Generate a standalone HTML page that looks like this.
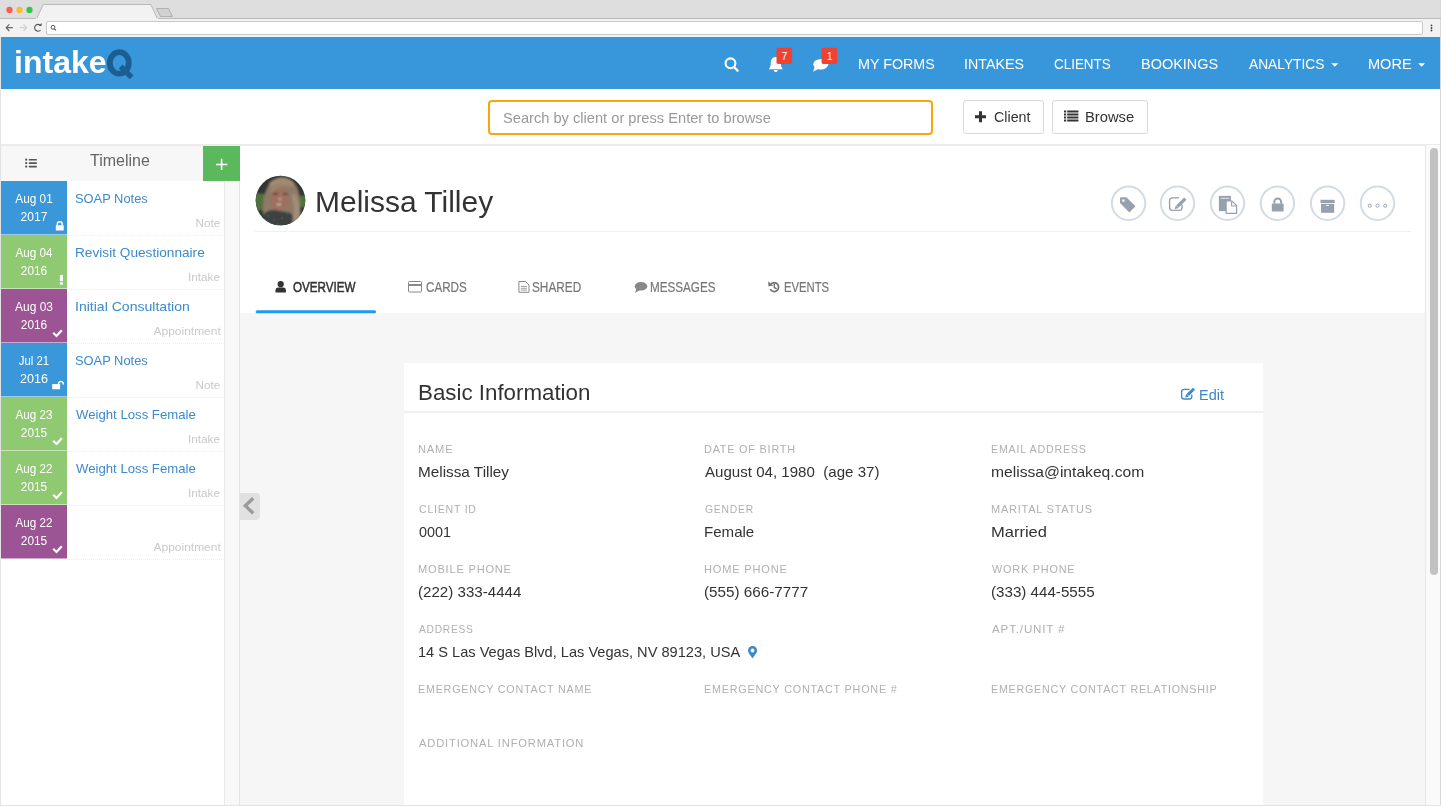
<!DOCTYPE html>
<html><head><meta charset="utf-8">
<style>
*{box-sizing:border-box;margin:0;padding:0}
html,body{width:1441px;height:806px;overflow:hidden;background:#fff;font-family:"Liberation Sans",sans-serif;}
.a{position:absolute}
.t{position:absolute;white-space:nowrap;line-height:1;z-index:6}
svg{position:absolute;overflow:visible;z-index:5}
</style></head>
<body>
<!-- browser chrome -->
<div class="a" style="left:0;top:0;width:1441px;height:18px;background:#dedede"></div>
<svg style="left:0;top:0" width="1441" height="38">
  <circle cx="9.5" cy="10" r="3.15" fill="#fc5b57"/>
  <circle cx="19.5" cy="10" r="3.15" fill="#fbbb2e"/>
  <circle cx="29.5" cy="10" r="3.15" fill="#33c748"/>
  <line x1="0" y1="18.5" x2="1441" y2="18.5" stroke="#bcbcbc" stroke-width="1"/>
  <path d="M36.5 19 L43.2 4.5 L150.8 4.5 L157.5 19 Z" fill="#f2f2f2" stroke="#b9b9b9" stroke-width="1"/>
  <rect x="36" y="18" width="122" height="2" fill="#f2f2f2"/>
  <path d="M156.5 8.5 L168.5 8.5 L172.5 16.5 L160.5 16.5 Z" fill="#d2d2d2" stroke="#b0b0b0" stroke-width="1"/>
</svg>
<div class="a" style="left:0;top:19px;width:1441px;height:18px;background:#f2f2f2"></div>
<div class="a" style="left:46px;top:21px;width:1377px;height:14px;background:#fff;border:1px solid #c9c9c9;border-radius:2px"></div>
<svg style="left:0;top:0" width="1441" height="38">
  <path d="M6.3 27.7 L12.8 27.7 M9.3 24.4 L6.2 27.7 L9.3 31" fill="none" stroke="#666" stroke-width="1.2"/>
  <path d="M20 27.7 L26.6 27.7 M23.5 24.4 L26.6 27.7 L23.5 31" fill="none" stroke="#cfcfcf" stroke-width="1.2"/>
  <path d="M40.6 25.6 A3.4 3.4 0 1 0 40.6 30" fill="none" stroke="#555" stroke-width="1.1"/>
  <path d="M38.6 26 L41.6 26 L41.6 23 Z" fill="#555"/>
  <circle cx="53" cy="27.3" r="1.9" fill="none" stroke="#555" stroke-width="1"/>
  <line x1="54.3" y1="28.6" x2="56" y2="30.3" stroke="#555" stroke-width="1.1"/>
  <circle cx="1431.5" cy="25.4" r="0.9" fill="#444"/>
  <circle cx="1431.5" cy="28" r="0.9" fill="#444"/>
  <circle cx="1431.5" cy="30.5" r="0.9" fill="#444"/>
</svg>
<div class="a" style="left:1440px;top:0;width:1px;height:806px;background:#d8d8d8"></div>
<div class="a" style="left:0;top:37px;width:1px;height:769px;background:#e3e3e3"></div>

<!-- header -->
<div class="a" style="left:1px;top:37px;width:1439px;height:52px;background:#3896da"></div>
<div class="t" id="logo1" style="left:14.00px;top:45.90px;font-size:32px;color:#fff;transform:scaleX(1.0008);transform-origin:left center;font-weight:bold">intake</div>
<svg style="left:0;top:0" width="200" height="90"><ellipse cx="119.3" cy="62.95" rx="9.5" ry="10.75" fill="none" stroke="#1c5e92" stroke-width="5.8"/><path d="M122.6 64.6 L133.6 75.6 L129.7 79.3 L118.7 68.4 Z" fill="#1c5e92"/></svg>
<div class="t" id="b7" style="left:781.60px;top:50.91px;font-size:10.5px;color:#fff;">7</div>
<div class="t" id="b1" style="left:826.80px;top:50.91px;font-size:10.5px;color:#fff;">1</div>
<div class="t" id="nav0" style="left:857.50px;top:56.17px;font-size:15.5px;color:#fff;transform:scaleX(0.9228);transform-origin:left center;">MY FORMS</div>
<div class="t" id="nav1" style="left:964.00px;top:56.17px;font-size:15.5px;color:#fff;transform:scaleX(0.9202);transform-origin:left center;">INTAKES</div>
<div class="t" id="nav2" style="left:1054.00px;top:56.17px;font-size:15.5px;color:#fff;transform:scaleX(0.8669);transform-origin:left center;">CLIENTS</div>
<div class="t" id="nav3" style="left:1140.50px;top:56.17px;font-size:15.5px;color:#fff;transform:scaleX(0.9327);transform-origin:left center;">BOOKINGS</div>
<div class="t" id="nav4" style="left:1248.50px;top:56.17px;font-size:15.5px;color:#fff;transform:scaleX(0.8882);transform-origin:left center;">ANALYTICS</div>
<div class="t" id="nav5" style="left:1368.00px;top:56.17px;font-size:15.5px;color:#fff;transform:scaleX(0.9385);transform-origin:left center;">MORE</div>
<div class="t" id="ph" style="left:502.50px;top:111.32px;font-size:14.5px;color:#999;transform:scaleX(1.0099);transform-origin:left center;">Search by client or press Enter to browse</div>
<div class="t" id="bcl" style="left:994.00px;top:110.32px;font-size:14.5px;color:#333;transform:scaleX(0.9849);transform-origin:left center;">Client</div>
<div class="t" id="bbr" style="left:1085.00px;top:110.32px;font-size:14.5px;color:#333;transform:scaleX(1.0176);transform-origin:left center;">Browse</div>
<div class="t" id="tl" style="left:90.00px;top:153.05px;font-size:16px;color:#666;transform:scaleX(1.0003);transform-origin:left center;">Timeline</div>


<svg style="left:0;top:0" width="1441" height="90">
  <!-- search -->
  <circle cx="730.5" cy="63.3" r="4.9" fill="none" stroke="#fff" stroke-width="2.1"/>
  <line x1="734" y1="67" x2="737.6" y2="70.6" stroke="#fff" stroke-width="2.3" stroke-linecap="round"/>
  <!-- bell -->
  <path d="M775.8 57 C771.5 57 770.8 60.5 770.8 63.5 C770.8 66.5 769.3 68.3 768.8 69.3 L782.8 69.3 C782.3 68.3 780.8 66.5 780.8 63.5 C780.8 60.5 780.1 57 775.8 57 Z" fill="#fff"/>
  <path d="M773.8 70 A2 2 0 0 0 777.8 70 Z" fill="#fff"/>
  <rect x="776.5" y="47.8" width="15.6" height="16.1" rx="1.6" fill="#f04131"/>
  <!-- chat -->
  <ellipse cx="820.8" cy="64.3" rx="7.5" ry="5.3" fill="#fff"/>
  <path d="M814.5 67 L813.2 71.7 L819 68.5 Z" fill="#fff"/>
  <rect x="821.6" y="47.8" width="15.5" height="16.1" rx="1.6" fill="#f04131"/>
  <!-- carets -->
  <path d="M1331.2 63.2 L1338.3 63.2 L1334.75 66.8 Z" fill="#fff"/>
  <path d="M1418.1 63.2 L1425.1 63.2 L1421.6 66.8 Z" fill="#fff"/>
</svg>

<!-- sub header -->
<div class="a" style="left:488px;top:100px;width:444.5px;height:34.5px;border:2.2px solid #f7a511;border-radius:4px;background:#fff"></div>
<div class="a" style="left:962.5px;top:100.3px;width:81px;height:34px;border:1px solid #d9d9d9;border-radius:3px;background:#fff"></div>
<svg style="left:0;top:0" width="1441" height="145">
  <path d="M980.5 111.3 V122.2 M975 116.75 H986" stroke="#333" stroke-width="3"/>
  <g fill="#333">
    <rect x="1064" y="110.5" width="2.2" height="2"/><rect x="1067.2" y="110.5" width="11.2" height="2"/>
    <rect x="1064" y="113.5" width="2.2" height="2"/><rect x="1067.2" y="113.5" width="11.2" height="2"/>
    <rect x="1064" y="116.5" width="2.2" height="2"/><rect x="1067.2" y="116.5" width="11.2" height="2"/>
    <rect x="1064" y="119.5" width="2.2" height="2"/><rect x="1067.2" y="119.5" width="11.2" height="2"/>
  </g>
</svg>
<div class="a" style="left:1051.5px;top:100.3px;width:96px;height:34px;border:1px solid #d9d9d9;border-radius:3px;background:#fff"></div>

<!-- timeline -->
<div class="a" style="left:1px;top:145px;width:202px;height:36px;background:#f7f7f7"></div>
<div class="a" style="left:203px;top:145px;width:37px;height:36px;background:#5cb85c"></div>
<svg style="left:0;top:0" width="260" height="190">
  <path d="M221.6 158.8 V170.1 M216 164.45 H227.3" stroke="#fff" stroke-width="1.6"/>
  <g fill="#555">
    <circle cx="26.2" cy="159.7" r="1.15"/><rect x="28.8" y="158.9" width="8.1" height="1.7" rx="0.5"/>
    <circle cx="26.2" cy="163.1" r="1.15"/><rect x="28.8" y="162.3" width="8.1" height="1.7" rx="0.5"/>
    <circle cx="26.2" cy="166.6" r="1.15"/><rect x="28.8" y="165.8" width="8.1" height="1.7" rx="0.5"/>
  </g>
</svg>

<div class="a" style="left:1px;top:181px;width:223px;height:625px;background:#fff"></div>
<div class="a" style="left:1px;top:181px;width:66.4px;height:53px;background:#3a97da"></div>
<div class="a" style="left:1px;top:234px;width:66.4px;height:1px;background:#3a97da;opacity:.5"></div>
<div class="a" style="left:67.5px;top:235px;width:156.5px;height:1px;border-top:1px dotted #ececec"></div>
<div class="t" id="d1_0" style="left:-6.00px;width:80px;text-align:center;top:193.41px;font-size:12.5px;color:#fff;transform:scaleX(0.9453);transform-origin:center center;">Aug 01</div>
<div class="t" id="d2_0" style="left:-5.70px;width:80px;text-align:center;top:211.41px;font-size:12.5px;color:#fff;transform:scaleX(0.9643);transform-origin:center center;">2017</div>
<div class="t" id="tt_0" style="left:74.90px;top:192.22px;font-size:13.2px;color:#3d8acb;transform:scaleX(0.9759);transform-origin:left center;">SOAP Notes</div>
<div class="t" id="ty_0" style="right:1220.70px;top:218.18px;font-size:11px;color:#c9c9c9;transform:scaleX(1.0656);transform-origin:right center;">Note</div>
<div class="a" style="left:1px;top:235px;width:66.4px;height:53px;background:#8fca72"></div>
<div class="a" style="left:1px;top:288px;width:66.4px;height:1px;background:#8fca72;opacity:.5"></div>
<div class="a" style="left:67.5px;top:289px;width:156.5px;height:1px;border-top:1px dotted #ececec"></div>
<div class="t" id="d1_1" style="left:-6.00px;width:80px;text-align:center;top:247.41px;font-size:12.5px;color:#fff;transform:scaleX(0.9348);transform-origin:center center;">Aug 04</div>
<div class="t" id="d2_1" style="left:-5.70px;width:80px;text-align:center;top:265.41px;font-size:12.5px;color:#fff;transform:scaleX(0.9488);transform-origin:center center;">2016</div>
<div class="t" id="tt_1" style="left:74.90px;top:246.22px;font-size:13.2px;color:#3d8acb;transform:scaleX(1.0353);transform-origin:left center;">Revisit Questionnaire</div>
<div class="t" id="ty_1" style="right:1220.70px;top:272.18px;font-size:11px;color:#c9c9c9;transform:scaleX(1.0690);transform-origin:right center;">Intake</div>
<div class="a" style="left:1px;top:289px;width:66.4px;height:53px;background:#9d5495"></div>
<div class="a" style="left:1px;top:342px;width:66.4px;height:1px;background:#9d5495;opacity:.5"></div>
<div class="a" style="left:67.5px;top:343px;width:156.5px;height:1px;border-top:1px dotted #ececec"></div>
<div class="t" id="d1_2" style="left:-6.00px;width:80px;text-align:center;top:301.41px;font-size:12.5px;color:#fff;transform:scaleX(0.9558);transform-origin:center center;">Aug 03</div>
<div class="t" id="d2_2" style="left:-5.70px;width:80px;text-align:center;top:319.41px;font-size:12.5px;color:#fff;transform:scaleX(0.9488);transform-origin:center center;">2016</div>
<div class="t" id="tt_2" style="left:74.90px;top:300.22px;font-size:13.2px;color:#3d8acb;transform:scaleX(1.0655);transform-origin:left center;">Initial Consultation</div>
<div class="t" id="ty_2" style="right:1220.70px;top:326.18px;font-size:11px;color:#c9c9c9;transform:scaleX(1.0888);transform-origin:right center;">Appointment</div>
<div class="a" style="left:1px;top:343px;width:66.4px;height:53px;background:#3a97da"></div>
<div class="a" style="left:1px;top:396px;width:66.4px;height:1px;background:#3a97da;opacity:.5"></div>
<div class="a" style="left:67.5px;top:397px;width:156.5px;height:1px;border-top:1px dotted #ececec"></div>
<div class="t" id="d1_3" style="left:-6.00px;width:80px;text-align:center;top:355.41px;font-size:12.5px;color:#fff;transform:scaleX(0.9091);transform-origin:center center;">Jul 21</div>
<div class="t" id="d2_3" style="left:-5.70px;width:80px;text-align:center;top:373.41px;font-size:12.5px;color:#fff;transform:scaleX(1.0097);transform-origin:center center;">2016</div>
<div class="t" id="tt_3" style="left:74.90px;top:354.22px;font-size:13.2px;color:#3d8acb;transform:scaleX(0.9759);transform-origin:left center;">SOAP Notes</div>
<div class="t" id="ty_3" style="right:1220.70px;top:380.18px;font-size:11px;color:#c9c9c9;transform:scaleX(1.0656);transform-origin:right center;">Note</div>
<div class="a" style="left:1px;top:397px;width:66.4px;height:53px;background:#8fca72"></div>
<div class="a" style="left:1px;top:450px;width:66.4px;height:1px;background:#8fca72;opacity:.5"></div>
<div class="a" style="left:67.5px;top:451px;width:156.5px;height:1px;border-top:1px dotted #ececec"></div>
<div class="t" id="d1_4" style="left:-6.00px;width:80px;text-align:center;top:409.41px;font-size:12.5px;color:#fff;transform:scaleX(0.9348);transform-origin:center center;">Aug 23</div>
<div class="t" id="d2_4" style="left:-5.70px;width:80px;text-align:center;top:427.41px;font-size:12.5px;color:#fff;transform:scaleX(0.9488);transform-origin:center center;">2015</div>
<div class="t" id="tt_4" style="left:75.90px;top:408.22px;font-size:13.2px;color:#3d8acb;transform:scaleX(0.9984);transform-origin:left center;">Weight Loss Female</div>
<div class="t" id="ty_4" style="right:1220.70px;top:434.18px;font-size:11px;color:#c9c9c9;transform:scaleX(1.0690);transform-origin:right center;">Intake</div>
<div class="a" style="left:1px;top:451px;width:66.4px;height:53px;background:#8fca72"></div>
<div class="a" style="left:1px;top:504px;width:66.4px;height:1px;background:#8fca72;opacity:.5"></div>
<div class="a" style="left:67.5px;top:505px;width:156.5px;height:1px;border-top:1px dotted #ececec"></div>
<div class="t" id="d1_5" style="left:-6.00px;width:80px;text-align:center;top:463.41px;font-size:12.5px;color:#fff;transform:scaleX(0.9348);transform-origin:center center;">Aug 22</div>
<div class="t" id="d2_5" style="left:-5.70px;width:80px;text-align:center;top:481.41px;font-size:12.5px;color:#fff;transform:scaleX(0.9488);transform-origin:center center;">2015</div>
<div class="t" id="tt_5" style="left:75.90px;top:462.22px;font-size:13.2px;color:#3d8acb;transform:scaleX(0.9984);transform-origin:left center;">Weight Loss Female</div>
<div class="t" id="ty_5" style="right:1220.70px;top:488.18px;font-size:11px;color:#c9c9c9;transform:scaleX(1.0690);transform-origin:right center;">Intake</div>
<div class="a" style="left:1px;top:505px;width:66.4px;height:53px;background:#9d5495"></div>
<div class="a" style="left:1px;top:558px;width:66.4px;height:1px;background:#9d5495;opacity:.5"></div>
<div class="a" style="left:67.5px;top:559px;width:156.5px;height:1px;border-top:1px dotted #ececec"></div>
<div class="t" id="d1_6" style="left:-6.00px;width:80px;text-align:center;top:517.41px;font-size:12.5px;color:#fff;transform:scaleX(0.9360);transform-origin:center center;">Aug 22</div>
<div class="t" id="d2_6" style="left:-5.70px;width:80px;text-align:center;top:535.41px;font-size:12.5px;color:#fff;transform:scaleX(0.9488);transform-origin:center center;">2015</div>
<div class="t" id="ty_6" style="right:1220.70px;top:542.18px;font-size:11px;color:#c9c9c9;transform:scaleX(1.0888);transform-origin:right center;">Appointment</div>
<svg style="left:0;top:0" width="240" height="600"><g transform="translate(0,0)"><rect x="55.8" y="225.2" width="7.9" height="5.3" rx="0.6" fill="#fff"/><path d="M57.3 225.5 V224.3 A2.45 2.45 0 0 1 62.2 224.3 V225.5" fill="none" stroke="#fff" stroke-width="1.5"/></g><g transform="translate(0,54)"><rect x="59.9" y="220.9" width="3" height="6.2" fill="#fff"/><rect x="59.9" y="228.3" width="3" height="2.4" fill="#fff"/></g><g transform="translate(0,108)"><path d="M53.2 224.7 L56.5 228 L61.8 222.2" fill="none" stroke="#fff" stroke-width="2.2"/></g><g transform="translate(0,162)"><rect x="52.2" y="222" width="7.9" height="5.3" rx="0.5" fill="#fff"/><path d="M58.6 222.3 V221 A2.45 2.45 0 0 1 63.2 221 V222.5" fill="none" stroke="#fff" stroke-width="1.5"/></g><g transform="translate(0,216)"><path d="M53.2 224.7 L56.5 228 L61.8 222.2" fill="none" stroke="#fff" stroke-width="2.2"/></g><g transform="translate(0,270)"><path d="M53.2 224.7 L56.5 228 L61.8 222.2" fill="none" stroke="#fff" stroke-width="2.2"/></g><g transform="translate(0,324)"><path d="M53.2 224.7 L56.5 228 L61.8 222.2" fill="none" stroke="#fff" stroke-width="2.2"/></g></svg>

<div class="a" style="left:224px;top:181px;width:1px;height:625px;background:#e8e8e8"></div>
<div class="a" style="left:225px;top:181px;width:14px;height:625px;background:#f8f8f8"></div>
<div class="a" style="left:239px;top:181px;width:1px;height:625px;background:#e3e3e3"></div>


<!-- main -->
<div class="a" style="left:240px;top:145px;width:1185px;height:168px;background:#fff"></div>
<div class="a" style="left:240px;top:313px;width:1185px;height:493px;background:#f6f6f6"></div>
<div class="a" style="left:240px;top:492.7px;width:19.5px;height:27.3px;background:#e1e1e1;border-radius:0 4px 4px 0"></div>
<svg style="left:0;top:0" width="300" height="600">
  <path d="M253.2 498.2 L245.3 505.7 L253.2 513.2" fill="none" stroke="#9a9a9a" stroke-width="3.3" stroke-linecap="butt"/>
</svg>

<svg style="left:0;top:0" width="1441" height="330">
<defs>
 <clipPath id="avc"><circle cx="280.5" cy="200.5" r="24.8"/></clipPath>
 <filter id="blur1" x="-20%" y="-20%" width="140%" height="140%"><feGaussianBlur stdDeviation="1.1"/></filter>
</defs>
<g clip-path="url(#avc)">
 <g transform="translate(254,174)">
 <rect x="0" y="0" width="54" height="54" fill="#333532"/>
 <g filter="url(#blur1)">
 <path d="M0 19 L11 20 L12 36 L0 37 Z" fill="#4f713c"/>
 <path d="M45 22 L54 21 L54 34 L46 33 Z" fill="#4f713c"/>
 <path d="M9 40 C8 26 11 6 27 3 C41 3 46 16 46 28 C47 38 46 46 43 52 L10 52 Z" fill="#8e7a66"/>
 <path d="M15 9 C21 3 34 2 40 9 L38 13 C33 10 24 9 17 14 Z" fill="#a08a72"/>
 <ellipse cx="25.5" cy="25" rx="9.5" ry="12" fill="#9e705f"/>
 <path d="M16 16 C20 9 32 8 37 14 C33 12 24 12 17 20 Z" fill="#9a826a"/>
 <path d="M37 22 C41 30 41 42 36 52 L45 52 C48 42 46 28 41 19 Z" fill="#a08c78"/>
 <path d="M4 54 C5 42 12 35 21 36 C28 38 33 37 38 40 C40 46 38 52 36 54 Z" fill="#3d4241"/>
 <rect x="19" y="19" width="5" height="1.5" fill="#4a3a34"/>
 <rect x="29" y="19" width="5" height="1.5" fill="#4a3a34"/>
 <ellipse cx="25" cy="30.5" rx="2.6" ry="1.1" fill="#c9bdb5"/>
 <circle cx="26" cy="25" r="1.8" fill="#bf9888"/>
 </g>
 <g fill="#34707c" opacity="0.55">
 <circle cx="14" cy="42" r="1"/><circle cx="20" cy="46" r="1"/><circle cx="28" cy="44" r="1"/><circle cx="33" cy="40" r="0.9"/><circle cx="24" cy="50" r="1"/><circle cx="16" cy="49" r="0.9"/>
 </g>
 </g>
</g>
<line x1="255" y1="231.5" x2="1411" y2="231.5" stroke="#efefef" stroke-width="1"/>
<g fill="none" stroke="#d3dce5" stroke-width="2">
 <circle cx="1128.6" cy="203.3" r="16.7"/>
 <circle cx="1177.5" cy="203.3" r="16.7"/>
 <circle cx="1227.5" cy="203.3" r="16.7"/>
 <circle cx="1277.4" cy="203.3" r="16.7"/>
 <circle cx="1327.6" cy="203.3" r="16.7"/>
 <circle cx="1377.5" cy="203.3" r="16.7"/>
</g>
<g fill="#97a0ad">
 <path d="M1120 198.4 Q1120 197.2 1121.2 197.2 L1126.4 197.2 L1135.5 206.3 L1129.4 212.4 L1120 203 Z M1123.4 199.2 A1.3 1.3 0 1 0 1123.41 199.2 Z" fill-rule="evenodd"/>
 <path d="M1179 197.9 L1172.5 197.9 Q1169.6 197.9 1169.6 200.8 L1169.6 207.5 Q1169.6 210.4 1172.5 210.4 L1179.2 210.4 Q1182.1 210.4 1182.1 207.5 L1182.1 204.8" fill="none" stroke="#97a0ad" stroke-width="1.4"/>
 <path d="M1175.6 205.9 L1184.1 197.4 L1186.5 199.8 L1178 208.3 L1174.6 209.3 Z" fill="#97a0ad"/><path d="M1176.4 205.6 L1178.3 207.5" stroke="#fff" stroke-width="0.6"/>
 <rect x="1218.9" y="195.9" width="12" height="15.2"/>
 <rect x="1220.8" y="197.8" width="8.4" height="0.9" fill="#e8ebef"/>
 <path d="M1226.1 201 L1232 201 L1236.6 205.6 L1236.6 213.4 L1226.1 213.4 Z" fill="#fff" stroke="#97a0ad" stroke-width="1.2"/>
 <path d="M1231.6 201 L1231.6 206 L1236.6 206" fill="none" stroke="#97a0ad" stroke-width="1.1"/>
 <rect x="1271.8" y="203.4" width="11.8" height="8.2" rx="0.8"/>
 <path d="M1274.3 203.6 L1274.3 201.8 A3.4 3.4 0 0 1 1281.1 201.8 L1281.1 203.6" fill="none" stroke="#97a0ad" stroke-width="2"/>
 <rect x="1320.5" y="199.8" width="14.2" height="3.3"/>
 <rect x="1321" y="203.9" width="13.2" height="8.9"/>
 <rect x="1326.2" y="205" width="2.8" height="1" fill="#fff"/>
</g>
<g fill="none" stroke="#97a0ad" stroke-width="0.9">
 <circle cx="1369.8" cy="205.7" r="1.6"/><circle cx="1377.5" cy="205.7" r="1.6"/><circle cx="1385.2" cy="205.7" r="1.6"/>
</g>
<!-- tab icons -->
<g fill="#333">
 <circle cx="280.7" cy="284.2" r="3.1"/>
 <path d="M275.5 292.5 L275.5 290.3 Q275.5 287.6 278.2 287.4 L283.2 287.4 Q285.9 287.6 285.9 290.3 L285.9 292.5 Z"/>
</g>
<g fill="none" stroke="#888" stroke-width="1">
 <rect x="408.5" y="281.5" width="13" height="10.5" rx="1"/>
 <path d="M518.9 281.5 L525.5 281.5 L529 285 L529 292.3 L518.9 292.3 Z"/>
</g>
<rect x="409" y="284" width="12" height="2" fill="#888"/>
<g stroke="#888" stroke-width="0.8"><line x1="520.8" y1="286.5" x2="527" y2="286.5"/><line x1="520.8" y1="288.3" x2="527" y2="288.3"/><line x1="520.8" y1="290.1" x2="527" y2="290.1"/></g>
<ellipse cx="641" cy="286.3" rx="6.3" ry="4.3" fill="#888"/>
<path d="M636.5 288.5 L635 293 L640 290 Z" fill="#888"/>
<path d="M770.9 284.2 A4.4 4.4 0 1 1 770.3 289.2" fill="none" stroke="#777" stroke-width="1.8"/>
<path d="M768.2 281.3 L768.4 286.3 L773.2 285.8 Z" fill="#777"/>
<path d="M774.3 284 L774.3 287.5 L776.6 288.8" fill="none" stroke="#777" stroke-width="1.5"/>
<rect x="255.6" y="310.2" width="120.5" height="3" rx="1.5" fill="#1d9bf0"/>
</svg>
<div class="t" id="name" style="left:315.20px;top:186.59px;font-size:30px;color:#333;transform:scaleX(0.9989);transform-origin:left center;">Melissa Tilley</div>
<div class="t" id="tab0" style="left:292.70px;top:279.94px;font-size:14px;color:#333;transform:scaleX(0.8298);transform-origin:left center;-webkit-text-stroke:0.5px #333">OVERVIEW</div>
<div class="t" id="tab1" style="left:425.90px;top:279.94px;font-size:14px;color:#777;transform:scaleX(0.8300);transform-origin:left center;-webkit-text-stroke:0.2px #777">CARDS</div>
<div class="t" id="tab2" style="left:532.40px;top:279.94px;font-size:14px;color:#777;transform:scaleX(0.8430);transform-origin:left center;-webkit-text-stroke:0.2px #777">SHARED</div>
<div class="t" id="tab3" style="left:650.40px;top:279.94px;font-size:14px;color:#777;transform:scaleX(0.8339);transform-origin:left center;-webkit-text-stroke:0.2px #777">MESSAGES</div>
<div class="t" id="tab4" style="left:783.90px;top:279.94px;font-size:14px;color:#777;transform:scaleX(0.8051);transform-origin:left center;-webkit-text-stroke:0.2px #777">EVENTS</div>
<div class="a" style="left:404px;top:363px;width:859px;height:443px;background:#fff"></div>
<div class="a" style="left:404px;top:411px;width:859px;height:2px;background:#f0f0f0"></div>
<div class="t" id="bi" style="left:417.90px;top:381.87px;font-size:22px;color:#333;transform:scaleX(1.0143);transform-origin:left center;">Basic Information</div>
<div class="t" id="edit" style="left:1198.70px;top:387.00px;font-size:15px;color:#3d87c6;transform:scaleX(0.9632);transform-origin:left center;">Edit</div>
<svg style="left:0;top:0" width="1441" height="806">
<path d="M1189.5 389.4 L1184.2 389.4 Q1181.6 389.4 1181.6 392 L1181.6 396.4 Q1181.6 399 1184.2 399 L1189.2 399 Q1191.8 399 1191.8 396.4 L1191.8 394.6" fill="none" stroke="#3d87c6" stroke-width="1.3"/>
<path d="M1186 394.6 L1192.9 387.7 L1195 389.8 L1188.1 396.7 L1185.2 397.5 Z" fill="#3d87c6"/><path d="M1186.8 394.2 L1188.6 396" stroke="#fff" stroke-width="0.6"/>
<path d="M752.5 646 A4.5 4.5 0 0 1 757.1 650.5 C757.1 653 754 656 752.5 658.4 C751 656 748 653 748 650.5 A4.5 4.5 0 0 1 752.5 646 Z M752.5 648.6 A1.9 1.9 0 1 0 752.51 648.6 Z" fill="#3d87c6" fill-rule="evenodd"/>
</svg>
<div class="t" id="lab_0_0" style="left:417.50px;top:444.48px;font-size:11px;color:#b0b0b0;transform:scaleX(1.0135);transform-origin:left center;letter-spacing:0.8px">NAME</div>
<div class="t" id="val_0_0" style="left:417.50px;top:464.40px;font-size:15px;color:#333;transform:scaleX(1.0204);transform-origin:left center;">Melissa Tilley</div>
<div class="t" id="lab_1_0" style="left:704.00px;top:444.48px;font-size:11px;color:#b0b0b0;transform:scaleX(0.9870);transform-origin:left center;letter-spacing:0.8px">DATE OF BIRTH</div>
<div class="t" id="val_1_0" style="left:705.00px;top:464.40px;font-size:15px;color:#333;transform:scaleX(1.0058);transform-origin:left center;">August 04, 1980&nbsp; (age 37)</div>
<div class="t" id="lab_2_0" style="left:991.00px;top:444.48px;font-size:11px;color:#b0b0b0;transform:scaleX(0.9691);transform-origin:left center;letter-spacing:0.8px">EMAIL ADDRESS</div>
<div class="t" id="val_2_0" style="left:991.00px;top:464.40px;font-size:15px;color:#333;transform:scaleX(1.0425);transform-origin:left center;">melissa@intakeq.com</div>
<div class="t" id="lab_0_1" style="left:418.50px;top:504.48px;font-size:11px;color:#b0b0b0;transform:scaleX(0.9595);transform-origin:left center;letter-spacing:0.8px">CLIENT ID</div>
<div class="t" id="val_0_1" style="left:418.50px;top:524.39px;font-size:15px;color:#333;transform:scaleX(0.9591);transform-origin:left center;">0001</div>
<div class="t" id="lab_1_1" style="left:705.00px;top:504.48px;font-size:11px;color:#b0b0b0;transform:scaleX(0.9425);transform-origin:left center;letter-spacing:0.8px">GENDER</div>
<div class="t" id="val_1_1" style="left:704.00px;top:524.39px;font-size:15px;color:#333;transform:scaleX(1.0047);transform-origin:left center;">Female</div>
<div class="t" id="lab_2_1" style="left:991.00px;top:504.48px;font-size:11px;color:#b0b0b0;transform:scaleX(0.9943);transform-origin:left center;letter-spacing:0.8px">MARITAL STATUS</div>
<div class="t" id="val_2_1" style="left:991.00px;top:524.39px;font-size:15px;color:#333;transform:scaleX(1.1006);transform-origin:left center;">Married</div>
<div class="t" id="lab_0_2" style="left:417.50px;top:564.48px;font-size:11px;color:#b0b0b0;transform:scaleX(1.0046);transform-origin:left center;letter-spacing:0.8px">MOBILE PHONE</div>
<div class="t" id="val_0_2" style="left:417.50px;top:584.39px;font-size:15px;color:#333;transform:scaleX(1.0080);transform-origin:left center;">(222) 333-4444</div>
<div class="t" id="lab_1_2" style="left:704.00px;top:564.48px;font-size:11px;color:#b0b0b0;transform:scaleX(1.0052);transform-origin:left center;letter-spacing:0.8px">HOME PHONE</div>
<div class="t" id="val_1_2" style="left:704.00px;top:584.39px;font-size:15px;color:#333;transform:scaleX(1.0158);transform-origin:left center;">(555) 666-7777</div>
<div class="t" id="lab_2_2" style="left:992.00px;top:564.48px;font-size:11px;color:#b0b0b0;transform:scaleX(0.9880);transform-origin:left center;letter-spacing:0.8px">WORK PHONE</div>
<div class="t" id="val_2_2" style="left:991.00px;top:584.39px;font-size:15px;color:#333;transform:scaleX(1.0100);transform-origin:left center;">(333) 444-5555</div>
<div class="t" id="lab_0_3" style="left:418.50px;top:624.48px;font-size:11px;color:#b0b0b0;transform:scaleX(0.9304);transform-origin:left center;letter-spacing:0.8px">ADDRESS</div>
<div class="t" id="val_0_3" style="left:417.50px;top:644.39px;font-size:15px;color:#333;transform:scaleX(0.9732);transform-origin:left center;">14 S Las Vegas Blvd, Las Vegas, NV 89123, USA</div>
<div class="t" id="lab_2_3" style="left:992.00px;top:624.48px;font-size:11px;color:#b0b0b0;transform:scaleX(1.0526);transform-origin:left center;letter-spacing:0.8px">APT./UNIT #</div>
<div class="t" id="lab_0_4" style="left:417.50px;top:684.48px;font-size:11px;color:#b0b0b0;transform:scaleX(0.9763);transform-origin:left center;letter-spacing:0.8px">EMERGENCY CONTACT NAME</div>
<div class="t" id="lab_1_4" style="left:704.00px;top:684.48px;font-size:11px;color:#b0b0b0;transform:scaleX(0.9806);transform-origin:left center;letter-spacing:0.8px">EMERGENCY CONTACT PHONE #</div>
<div class="t" id="lab_2_4" style="left:991.00px;top:684.48px;font-size:11px;color:#b0b0b0;transform:scaleX(0.9725);transform-origin:left center;letter-spacing:0.8px">EMERGENCY CONTACT RELATIONSHIP</div>
<div class="t" id="lab_add" style="left:418.50px;top:738.38px;font-size:11px;color:#b0b0b0;transform:scaleX(1.0174);transform-origin:left center;letter-spacing:0.8px">ADDITIONAL INFORMATION</div>

<div class="a" style="left:1px;top:144px;width:1439px;height:2px;background:#ebebeb"></div>
<!-- scrollbar -->
<div class="a" style="left:1425px;top:145px;width:15px;height:661px;background:#fafafa;border-left:1px solid #e8e8e8"></div>
<div class="a" style="left:1429.5px;top:148.3px;width:8px;height:427px;background:#c1c1c1;border-radius:4px"></div>
<div class="a" style="left:0;top:805px;width:1441px;height:1px;background:#e4e4e4"></div>

</body></html>
